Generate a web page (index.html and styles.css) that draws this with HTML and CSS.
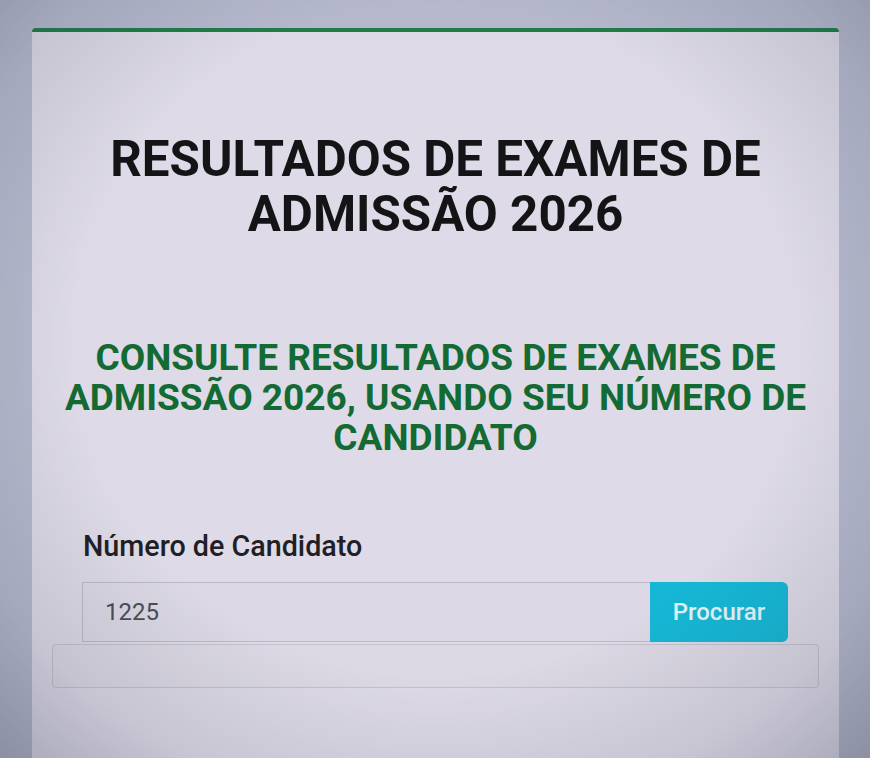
FILE: index.html
```html
<!DOCTYPE html>
<html lang="pt">
<head>
<meta charset="utf-8">
<title>Resultados de Exames de Admissão 2026</title>
<link rel="stylesheet" href="styles.css">
</head>
<body>
<div class="page">
  <main class="card">
    <h1 class="title">RESULTADOS DE EXAMES DE ADMISSÃO 2026</h1>
    <h2 class="subtitle">CONSULTE RESULTADOS DE EXAMES DE ADMISSÃO 2026, USANDO SEU NÚMERO DE CANDIDATO</h2>
    <form class="search">
      <label class="label" for="cand">Número de Candidato</label>
      <div class="group">
        <input class="input" id="cand" type="text" value="1225">
        <button class="btn" type="button">Procurar</button>
      </div>
    </form>
    <div class="result"></div>
  </main>
</div>
<div class="vignette"></div>
</body>
</html>
```
FILE: styles.css
```css
html, body {
  margin: 0;
  height: 100%;
}
body {
  background: #b6b9cd;
  font-family: Roboto, "Liberation Sans", Arial, sans-serif;
  overflow: hidden;
}
.page {
  padding: 28px 31px 0 32px;
  height: 100%;
  box-sizing: border-box;
}
.card {
  background: #dedae7;
  border-top: 4px solid #1f7d48;
  border-radius: 4px 4px 0 0;
  height: 100%;
  box-sizing: border-box;
  padding: 100px 20px 0;
  display: flex;
  flex-direction: column;
}
.title {
  margin: 0;
  text-align: center;
  font-size: 49.3px;
  line-height: 1.12;
  font-weight: 700;
  color: #141416;
  padding: 0 10px;
}
.subtitle {
  margin: 96px 0 0;
  text-align: center;
  font-size: 37px;
  line-height: 40px;
  font-weight: 700;
  color: #136a32;
  padding: 0 10px;
}
.search {
  margin: 72px 30px 0;
  display: flex;
  flex-direction: column;
}
.label {
  font-size: 28.7px;
  line-height: 1.15;
  font-weight: 500;
  color: #202024;
  padding-left: 1px;
}
.group {
  display: flex;
  margin-top: 19px;
  height: 60px;
  margin-right: 1px;
}
.input {
  flex: 1;
  min-width: 0;
  box-sizing: border-box;
  height: 100%;
  border: 1px solid #bdb9c8;
  border-right: none;
  border-radius: 0;
  background: #dcd8e5;
  padding: 0 22px;
  font-family: Roboto, "Liberation Sans", Arial, sans-serif;
  font-size: 24px;
  color: #4d4c55;
  outline: none;
}
.btn {
  width: 138px;
  height: 100%;
  border: none;
  border-radius: 0 6px 6px 0;
  background: #16b7d5;
  color: #e3f4f8;
  font-family: Roboto, "Liberation Sans", Arial, sans-serif;
  font-size: 24px;
  font-weight: 500;
  padding: 0;
}
.result {
  margin-top: 2px;
  height: 44px;
  border: 1px solid #c4c0cd;
  border-radius: 4px;
  background: #dcd8e4;
  box-sizing: border-box;
}
.vignette {
  position: fixed;
  inset: 0;
  pointer-events: none;
  background: radial-gradient(ellipse 75% 80% at 50% 45%, rgba(40,50,70,0) 55%, rgba(40,50,70,0.12) 78%, rgba(30,40,60,0.32) 100%);
}
```
